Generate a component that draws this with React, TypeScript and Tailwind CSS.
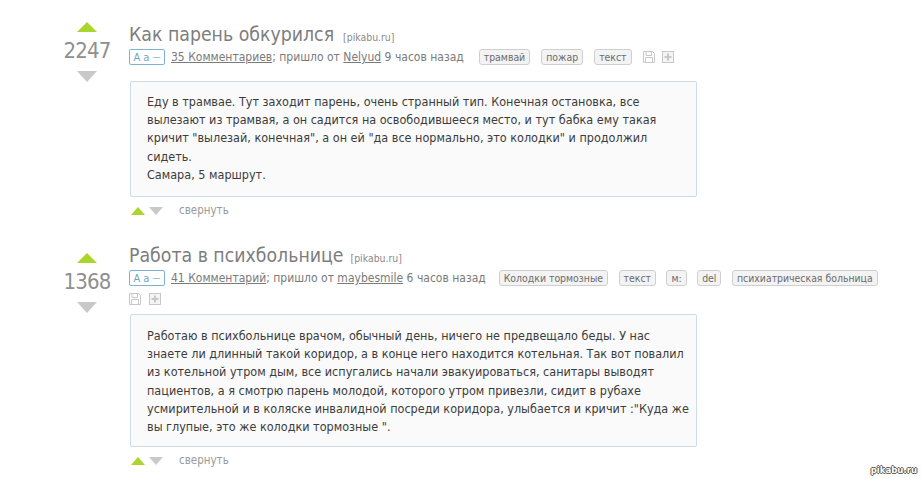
import React from "react";

const Up = ({ w, h }: { w: number; h: number }) => (
  <svg width={w} height={h} viewBox="0 0 20 12" preserveAspectRatio="none" className="block">
    <polygon points="10,0 20,12 0,12" fill="#a9d52c" />
  </svg>
);
const Down = ({ w, h }: { w: number; h: number }) => (
  <svg width={w} height={h} viewBox="0 0 20 12" preserveAspectRatio="none" className="block">
    <polygon points="0,0 20,0 10,12" fill="#c9c9c9" />
  </svg>
);

const SaveIcon = () => (
  <svg width="12" height="12" viewBox="0 0 12 12" className="block" fill="none" stroke="#c8c8c8">
    <path d="M0.5 0.5H9.5L11.5 2.5V11.5H0.5Z" />
    <path d="M3 0.5V4.5H8.5V0.5" />
    <path d="M2.5 11.5V6.5H9.5V11.5" />
  </svg>
);
const PlusIcon = () => (
  <svg width="12" height="12" viewBox="0 0 12 12" className="block" fill="#f4f4f4" stroke="#c8c8c8">
    <rect x="0.5" y="0.5" width="11" height="11" />
    <path d="M6 2.5V9.5M2.5 6H9.5" strokeWidth="2" fill="none" />
  </svg>
);

const Tag = ({ children }: { children: React.ReactNode }) => (
  <span className="inline-flex h-[16px] items-center whitespace-nowrap rounded-[3px] border border-[#cfcfcf] bg-[#f3f3f3] px-[4px] text-[10.4px] leading-none text-[#6b6b6b]">
    {children}
  </span>
);

const Size = () => (
  <span className="inline-flex h-[16px] w-[36px] items-center justify-center gap-[3px] rounded-[2px] border border-[#7fb2cf] text-[11px] leading-none text-[#6fa5c4]">
    <span>A</span><span>a</span><span className="text-[9px]">—</span>
  </span>
);

type PostProps = {
  score: string;
  title: string;
  comments: string;
  author: string;
  time: string;
  tags: string[];
  wrapIcons?: boolean;
  lines: string[];
  ratingTop: string;
  titleGap: string;
  boxClass: string;
  tagsClass: string;
};

const Post = ({ score, title, comments, author, time, tags, wrapIcons, lines, ratingTop, titleGap, boxClass, tagsClass }: PostProps) => {
  return (
    <div className="flex">
      <div className={`${ratingTop} mr-[15px] flex h-fit w-[54px] shrink-0 flex-col items-center`}>
        <Up w={20} h={10} />
        <div className="mt-[6px] text-[22px] leading-[26px] tracking-[-0.8px] text-[#8f8f8f]">{score}</div>
        <div className="mt-[7px]"><Down w={20} h={11} /></div>
      </div>
      <div className="min-w-0 flex-1">
        <div className="flex h-[24px] items-baseline">
          <span className="text-[19.3px] leading-[24px] text-[#7d7d7d]">{title}</span>
          <span className={`${titleGap} text-[10.4px] text-[#8a8a8a]`}>[pikabu.ru]</span>
        </div>
        <div className="flex h-[20px] items-center">
          <Size />
          <span className="ml-[6px] whitespace-nowrap text-[12px] text-[#7a7a7a]">
            <span className="underline">{comments}</span>; пришло от <span className="underline">{author}</span> {time}
          </span>
          <span className={`${tagsClass} flex items-center`}>
            {tags.map((t) => (
              <Tag key={t}>{t}</Tag>
            ))}
            {!wrapIcons && (
              <span className="flex items-center gap-[7px]">
                <SaveIcon />
                <PlusIcon />
              </span>
            )}
          </span>
        </div>
        {wrapIcons && (
          <div className="mt-[5px] flex h-[12px] items-center gap-[8px]">
            <SaveIcon />
            <PlusIcon />
          </div>
        )}
        <div className={`${boxClass} ml-px w-[567px] rounded-[2px] border border-[#cddde8] bg-[#fafafa] px-[16px] text-[12.5px] leading-[18.2px] text-[#3c3c3c]`}>
          {lines.map((l) => (
            <div key={l} className="whitespace-nowrap">{l}</div>
          ))}
        </div>
        <div className="mt-[9px] ml-[2px] flex h-[10px] items-center">
          <Up w={14} h={8} />
          <span className="ml-[4px]"><Down w={14} h={8} /></span>
          <span className="ml-[16px] text-[11.5px] leading-none text-[#9a9a9a]">свернуть</span>
        </div>
      </div>
    </div>
  );
};

export default function App() {
  return (
    <div className="relative h-[479px] w-[921px] overflow-hidden bg-white pt-[23px] pl-[60px] font-['DejaVu_Sans_Condensed','DejaVu_Sans',sans-serif] [font-stretch:condensed]">
      <Post
        score="2247"
        title="Как парень обкурился"
        comments="35 Комментариев"
        author="Nelyud"
        time="9 часов назад"
        tags={["трамвай", "пожар", "текст"]}
        ratingTop="-mt-px"
        titleGap="ml-[9px]"
        boxClass="mt-[14px] pt-[11px] pb-[12px]"
        tagsClass="ml-[15px] gap-[11px]"
        lines={[
          "Еду в трамвае. Тут заходит парень, очень странный тип. Конечная остановка, все",
          "вылезают из трамвая, а он садится на освободившееся место, и тут бабка ему такая",
          'кричит "вылезай, конечная", а он ей "да все нормально, это колодки" и продолжил',
          "сидеть.",
          "Самара, 5 маршрут.",
        ]}
      />
      <div className="mt-[28px]">
        <Post
          score="1368"
          title="Работа в психбольнице"
          comments="41 Комментарий"
          author="maybesmile"
          time="6 часов назад"
          tags={["Колодки тормозные", "текст", "м:", "del", "психиатрическая больница"]}
          wrapIcons
          ratingTop="mt-[9px]"
          titleGap="ml-[7px]"
          boxClass="mt-[9px] pt-[12px] pb-[10px]"
          tagsClass="ml-[13px] gap-[10.5px]"
          lines={[
            "Работаю в психбольнице врачом, обычный день, ничего не предвещало беды. У нас",
            "знаете ли длинный такой коридор, а в конце него находится котельная. Так вот повалил",
            "из котельной утром дым, все испугались начали эвакуироваться, санитары выводят",
            "пациентов, а я смотрю парень молодой, которого утром привезли, сидит в рубахе",
            "усмирительной и в коляске инвалидной посреди коридора, улыбается и кричит :\"Куда же",
            'вы глупые, это же колодки тормозные ".',
          ]}
        />
      </div>
      <span className="absolute bottom-[5px] right-[4px] text-[9.5px] font-bold leading-none text-white [text-shadow:1px_0_0_#555,-1px_0_0_#555,0_1px_0_#555,0_-1px_0_#555]">
        pikabu.ru
      </span>
    </div>
  );
}
